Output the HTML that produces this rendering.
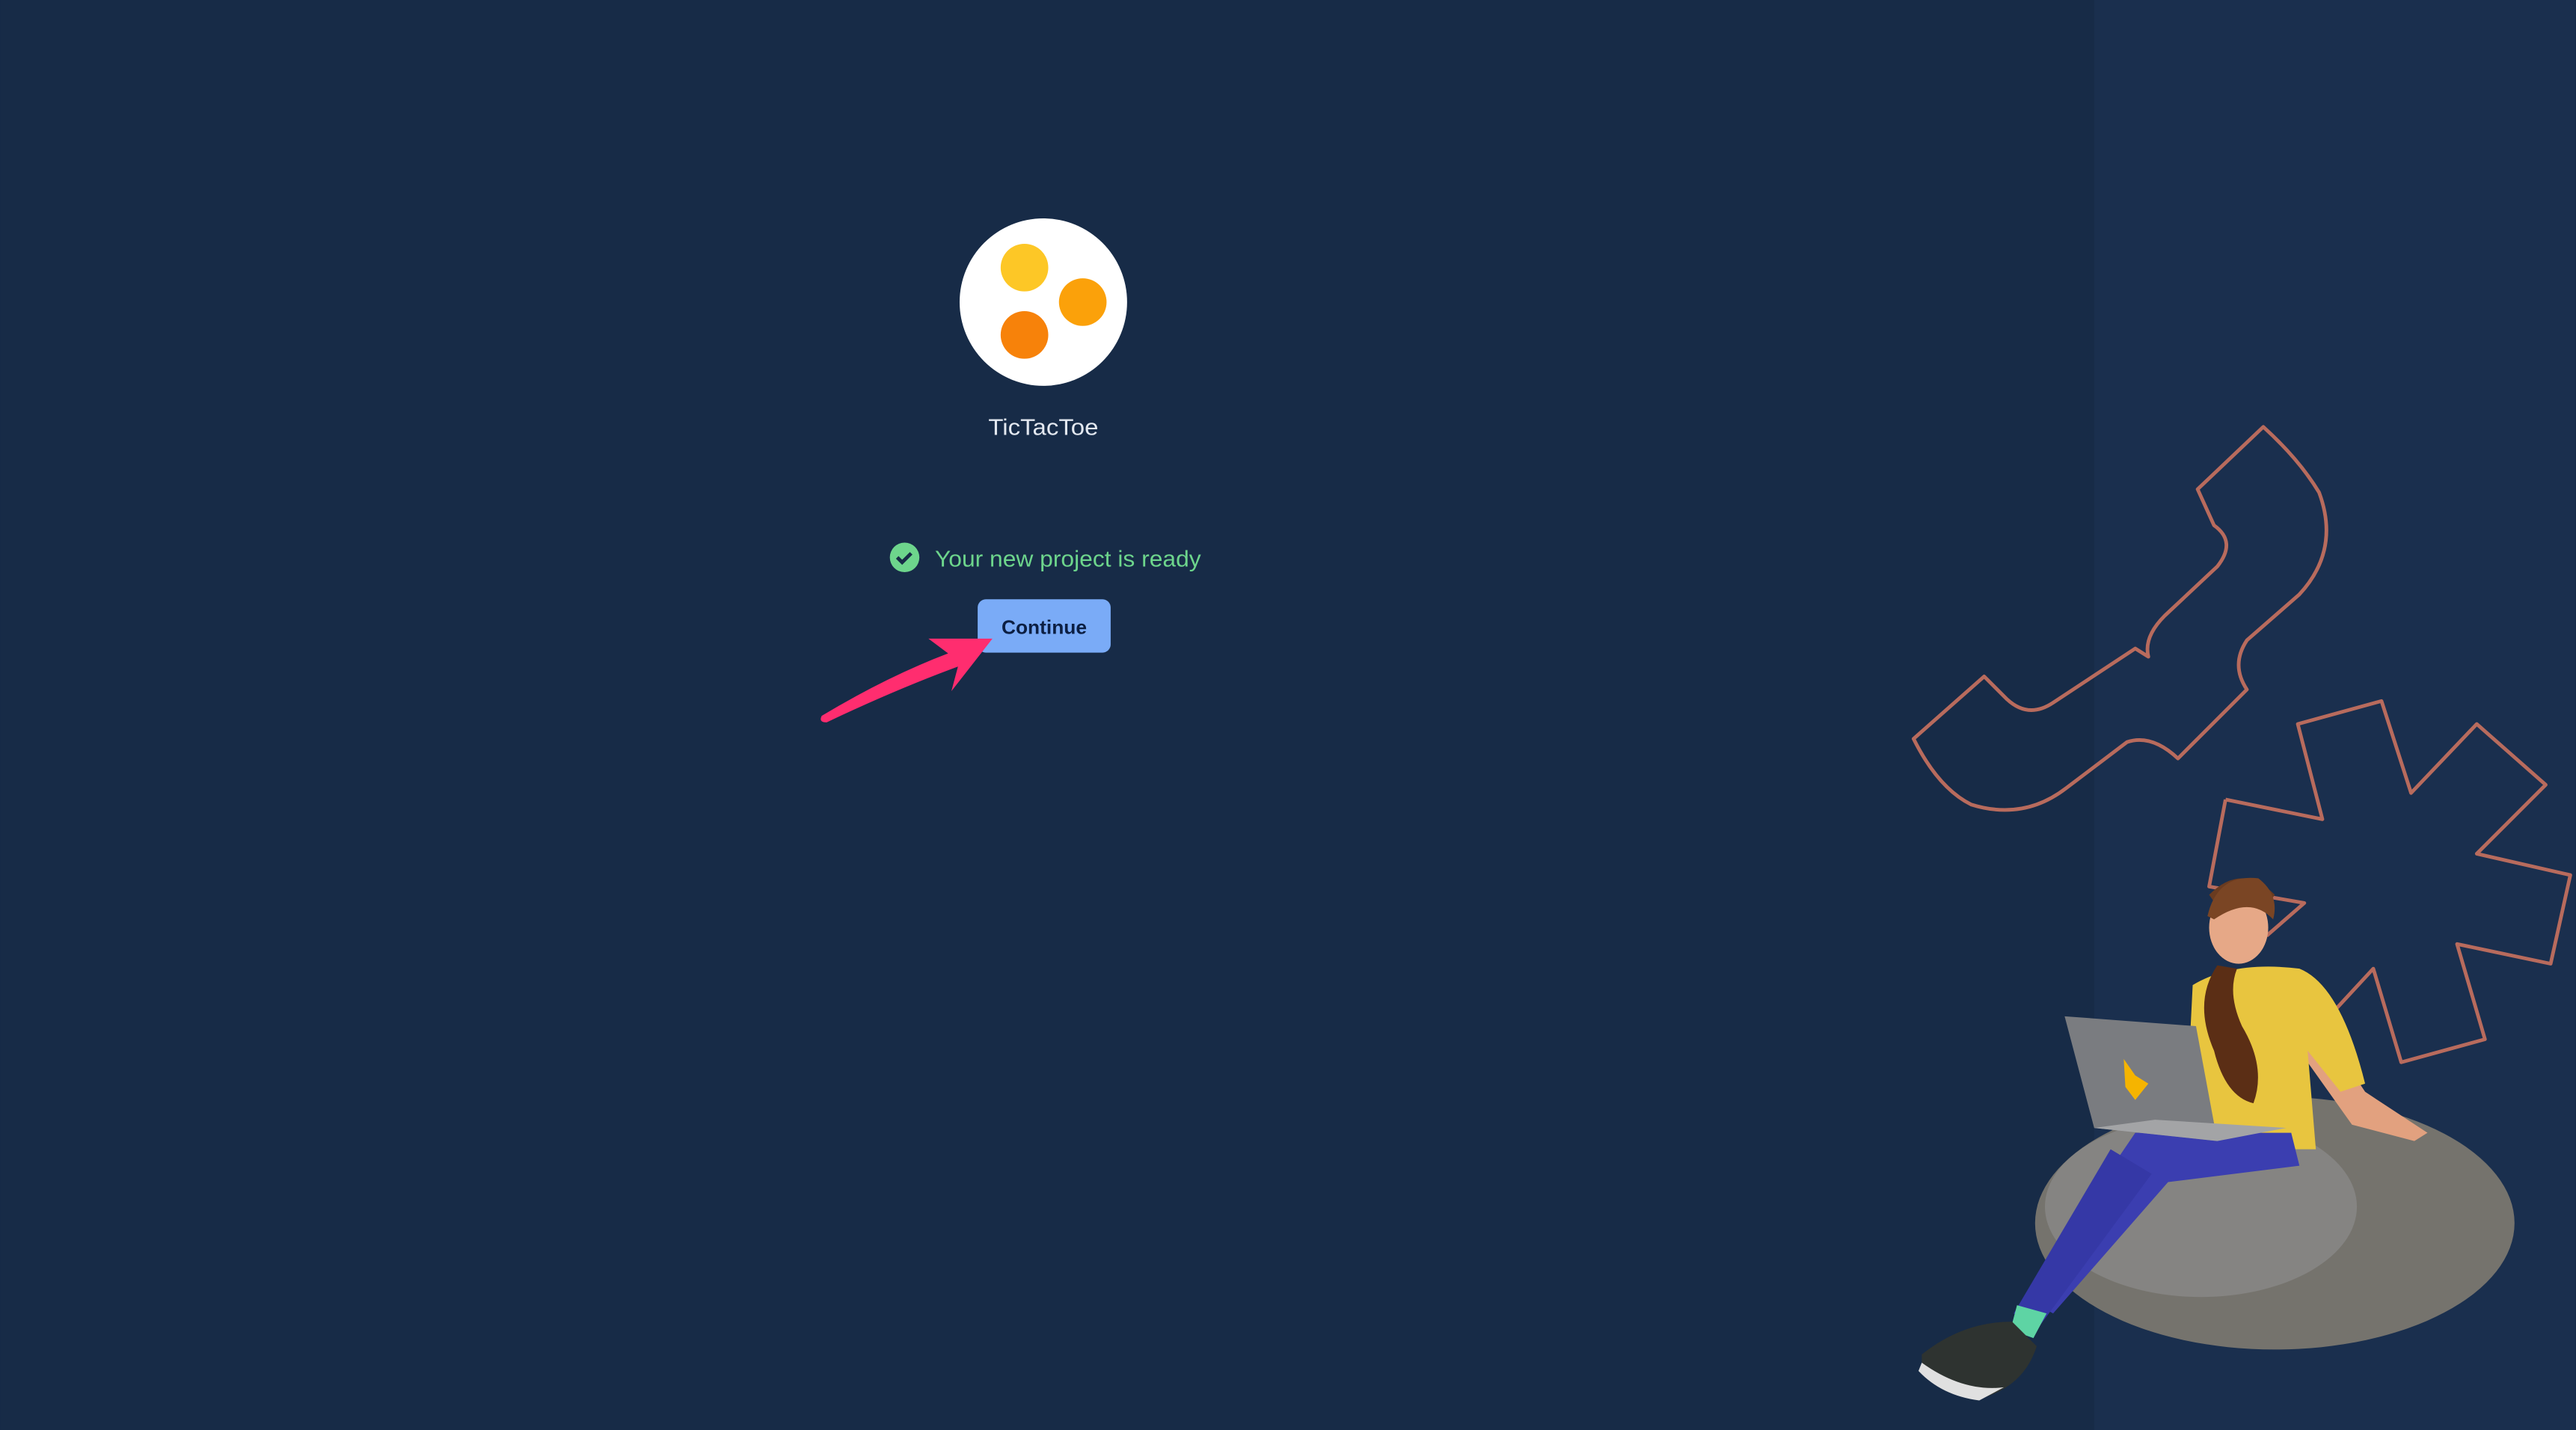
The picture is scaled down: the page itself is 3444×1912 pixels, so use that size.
<!DOCTYPE html>
<html><head><meta charset="utf-8"><style>
html,body{margin:0;padding:0;background:#172b47;overflow:hidden}
svg{display:block}
text{font-family:"Liberation Sans",sans-serif}
</style></head><body>
<svg width="3444" height="1912" viewBox="0 0 1568 871" xmlns="http://www.w3.org/2000/svg">
<rect width="1568" height="871" fill="#172b47"/>
<rect x="1275" width="293" height="871" fill="#1a2f4e"/>
<!-- logo -->
<circle cx="635" cy="184" r="51" fill="#fff"/>
<circle cx="623.5" cy="163" r="14.5" fill="#fdc726"/>
<circle cx="659" cy="184" r="14.5" fill="#fba10a"/>
<circle cx="623.5" cy="204" r="14.5" fill="#f7820a"/>
<text x="635" y="265" font-size="14" fill="#e3e8f0" text-anchor="middle" textLength="67" lengthAdjust="spacingAndGlyphs">TicTacToe</text>
<!-- status -->
<circle cx="550.5" cy="339.5" r="9" fill="#6dd58c"/>
<path d="M546 339.5 l3 3 l5.5 -5.5" stroke="#172b47" stroke-width="2.2" fill="none"/>
<text x="569" y="345" font-size="14" fill="#6dd58c" textLength="162" lengthAdjust="spacingAndGlyphs">Your new project is ready</text>
<rect x="595" y="365" width="81" height="32.5" rx="5" fill="#7aabf7"/>
<text x="635.5" y="386" font-size="12" font-weight="bold" fill="#0c1f43" text-anchor="middle">Continue</text>
<!-- arrow -->
<path d="M500 436 Q540 412 577 398 L565 389 L604 389 L579 421 L583 406 Q545 420 503 440 Q498 440 500 436 Z" fill="#ff2d6f"/>
<!-- outline shapes -->
<g fill="none" stroke="#b86b5d" stroke-width="2.2" stroke-linejoin="round">
<path d="M1165 450 L1208 412 L1222 426 Q1235 438 1250 428 L1300 395 L1308 400 Q1305 388 1318 375 L1350 345 Q1362 330 1348 320 L1338 298 L1378 260 Q1400 280 1412 300 Q1425 335 1400 362 L1368 390 Q1358 405 1368 420 L1326 462 Q1310 447 1295 452 L1258 480 Q1232 500 1200 490 Q1180 480 1165 450 Z"/>
<path d="M1355 487 L1414 499 L1399 441 L1450 427 L1468 483 L1508 441 L1550 478 L1508 520 L1565 533 L1553 587 L1496 575 L1513 633 L1462 647 L1445 590 L1420 617"/>
<path d="M1355 487 L1345 540 L1403 550 L1380 570"/>
</g>
<!-- beanbag -->
<ellipse cx="1385" cy="745" rx="146" ry="77" fill="#75736d"/>
<ellipse cx="1340" cy="735" rx="95" ry="55" fill="#858482"/>
<!-- arm on beanbag -->
<path d="M1410 620 L1440 665 L1478 690 L1470 695 L1432 685 L1400 640 Z" fill="#e2a17f"/>
<!-- torso -->
<path d="M1335 600 Q1360 585 1400 590 Q1425 600 1440 660 L1425 665 L1405 640 L1410 700 L1330 700 Z" fill="#e8c53f"/>
<!-- hair -->
<path d="M1345 545 Q1365 525 1385 545 L1380 552 Q1365 545 1352 555 Z" fill="#6a3b20"/>
<path d="M1350 588 Q1335 610 1348 640 Q1355 668 1372 672 Q1380 650 1365 625 Q1356 605 1362 590 Z" fill="#5b2e15"/>
<!-- head -->
<ellipse cx="1363" cy="565" rx="18" ry="22" fill="#e6a887"/>
<path d="M1344 558 Q1350 532 1375 535 Q1388 545 1384 560 Q1370 545 1348 560 Z" fill="#7a4524"/>
<!-- legs -->
<path d="M1300 690 L1395 690 L1400 710 L1320 720 L1250 800 L1232 790 Z" fill="#3b3eb0"/>
<path d="M1285 700 L1310 715 L1240 810 L1226 800 Z" fill="#3538a6"/>
<path d="M1228 795 L1246 800 L1238 815 L1224 810 Z" fill="#5ed4a4"/>
<!-- shoe -->
<path d="M1170 825 Q1195 805 1225 805 L1240 820 Q1232 845 1205 852 Q1180 845 1170 830 Z" fill="#2e3330"/>
<path d="M1170 830 Q1195 848 1220 845 L1205 853 Q1182 850 1168 835 Z" fill="#e0e0e0"/>
<!-- laptop -->
<path d="M1257 619 L1337 625 L1350 695 L1275 687 Z" fill="#7a7c80"/>
<path d="M1275 687 L1350 695 L1392 687 L1312 682 Z" fill="#a3a4a6"/>
<path d="M1293 645 L1300 655 L1308 660 L1300 670 L1294 662 Z" fill="#f5b400"/>
</svg>
</body></html>
